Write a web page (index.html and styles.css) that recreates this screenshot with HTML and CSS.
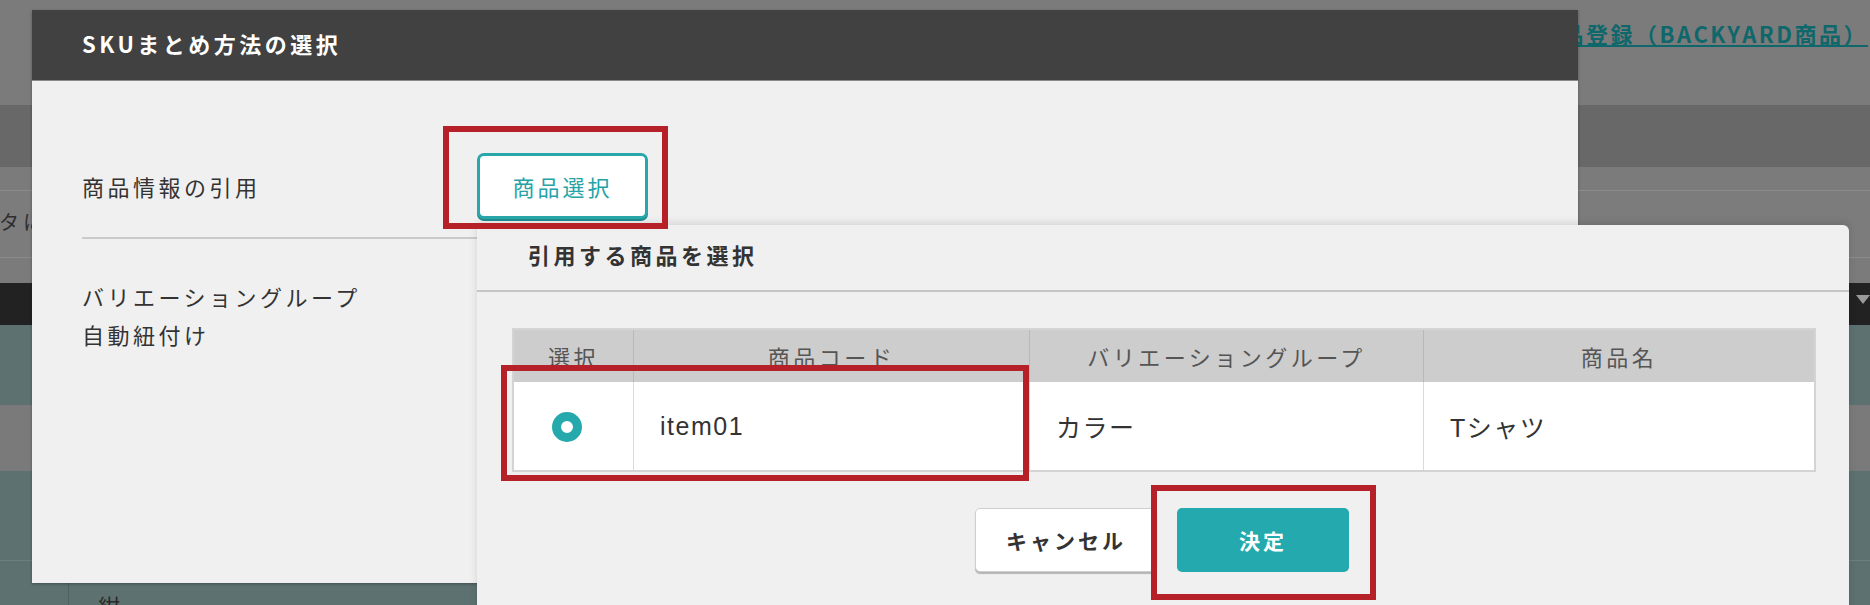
FILE: index.html
```html
<!DOCTYPE html>
<html>
<head>
    <meta charset="utf-8">
    <title>SKUまとめ方法の選択</title>
    <link rel="stylesheet" href="styles.css">
</head>
<body>
    <div class="screen">
        <!-- page behind the modal (already dimmed) -->
        <div class="backdrop">
            <div class="band band-top">
                <a class="page-link">商品登録（BACKYARD商品）</a>
            </div>
            <div class="band band-dark"></div>
            <div class="band band-gap"></div>
            <div class="band band-tabs"><span class="tab-text">タに</span></div>
            <div class="band band-gap2"></div>
            <div class="band band-black"><span class="caret"></span></div>
            <div class="band band-teal"></div>
            <div class="band band-gray"></div>
            <div class="band band-teal band-short"></div>
            <div class="band band-teal band-last">
                <span class="cell-line"></span><span class="cell-text">紺</span>
            </div>
        </div>

        <section class="dialog sku-dialog">
            <header class="dialog-title">SKUまとめ方法の選択</header>
            <div class="form-row first-row">
                <div class="form-label">商品情報の引用</div>
                <button class="outline-button">商品選択</button>
            </div>
            <div class="form-row">
                <div class="form-label">バリエーショングループ<br>自動紐付け</div>
            </div>
        </section>

        <section class="dialog pick-dialog">
            <header class="pick-title">引用する商品を選択</header>
            <table class="item-table">
                <thead>
                    <tr>
                        <th class="col-select">選択</th>
                        <th>商品コード</th>
                        <th>バリエーショングループ</th>
                        <th>商品名</th>
                    </tr>
                </thead>
                <tbody>
                    <tr>
                        <td class="col-select"><span class="radio checked"></span></td>
                        <td>item01</td>
                        <td>カラー</td>
                        <td>Tシャツ</td>
                    </tr>
                </tbody>
            </table>
            <div class="actions">
                <button class="plain-button">キャンセル</button>
                <button class="primary-button">決定</button>
            </div>
        </section>

        <!-- highlight frames -->
        <div class="mark mark-pick"></div>
        <div class="mark mark-row"></div>
        <div class="mark mark-ok"></div>
    </div>
</body>
</html>
```

FILE: styles.css
```css
body {
    margin: 0;
    font-family: 'Noto Sans CJK JP', sans-serif;
    color: #333;
}

.screen {
    position: relative;
    width: 1870px;
    height: 605px;
    overflow: hidden;
}

.backdrop {
    display: flex;
    flex-direction: column;
    height: 100%;
}

.band {
    position: relative;
    flex: none;
}

.band-top {
    height: 105px;
    background: #7b7b7b;
    display: flex;
    justify-content: flex-end;
    padding-right: 2px;
}

.page-link {
    margin-top: 17px;
    font-size: 22px;
    font-weight: bold;
    letter-spacing: 2.5px;
    line-height: 32px;
    color: #0e676b;
    text-decoration: underline;
}

.band-dark {
    height: 62px;
    background: #686868;
}

.band-gap {
    height: 23px;
    background: #7b7b7b;
}

.band-gap2 {
    height: 25px;
    background: #7b7b7b;
}

.band-tabs {
    height: 68px;
    background: #7c7c7c;
    border-top: 1px solid #8c8c8c;
    border-bottom: 1px solid #8c8c8c;
    box-sizing: border-box;
}

.tab-text {
    position: absolute;
    left: -1px;
    top: 16px;
    font-size: 20px;
    letter-spacing: 4px;
    color: #2e2e2e;
}

.band-black {
    height: 42px;
    background: #222;
}

.caret {
    position: absolute;
    right: 0;
    top: 12px;
    border-left: 7px solid transparent;
    border-right: 7px solid transparent;
    border-top: 9px solid #9a9a9a;
}

.band-teal {
    height: 80px;
    background: #5d7171;
}

.band-gray {
    height: 66px;
    background: #7a7a7a;
}

.band-short {
    height: 89px;
}

.band-last {
    height: 45px;
    border-top: 1px solid #6f7f7f;
}

.cell-line {
    position: absolute;
    left: 68px;
    top: 0;
    bottom: 0;
    border-left: 1px solid #4f6262;
}

.cell-text {
    position: absolute;
    left: 98px;
    top: 28px;
    font-size: 22px;
    color: #2a2a2a;
}

/* modal windows */
.dialog {
    position: absolute;
    background: #f0f0f0;
    box-sizing: border-box;
}

.sku-dialog {
    left: 32px;
    top: 10px;
    width: 1546px;
    height: 573px;
    box-shadow: 0 1px 3px rgba(0,0,0,0.3);
}

.dialog-title {
    height: 66px;
    line-height: 66px;
    padding-bottom: 4px;
    padding-left: 50px;
    background: #414141;
    border-bottom: 1px solid #8a8a8a;
    color: white;
    font-size: 22px;
    font-weight: bold;
    letter-spacing: 3.5px;
}

.form-row {
    display: flex;
    align-items: center;
    margin: 0 50px;
    padding: 38px 0;
}

.first-row {
    padding: 72px 0 18px;
    border-bottom: 2px solid #cacaca;
}

.form-row:not(.first-row) {
    align-items: flex-start;
}

.form-label {
    width: 395px;
    font-size: 22px;
    line-height: 38px;
    letter-spacing: 3.5px;
    color: #333;
}

.outline-button {
    width: 171px;
    height: 66px;
    background: white;
    border: 3px solid #2aa7aa;
    border-radius: 7px;
    color: #25a3a7;
    font-family: inherit;
    font-size: 22px;
    letter-spacing: 3px;
    box-shadow: 0 2px 0 #1e8e91;
}

.pick-dialog {
    left: 477px;
    top: 225px;
    width: 1372px;
    height: 400px;
    border-radius: 0 6px 0 0;
    box-shadow: 0 -2px 8px rgba(0,0,0,0.12);
}

.pick-title {
    height: 58px;
    line-height: 58px;
    padding-bottom: 7px;
    padding-left: 51px;
    border-bottom: 2px solid #c6c6c6;
    font-size: 22px;
    font-weight: bold;
    letter-spacing: 3.5px;
    color: #333;
}

.item-table {
    margin: 36px 0 0 35px;
    width: 1304px;
    border-collapse: collapse;
    border: 2px solid #d4d4d4;
    font-family: 'Liberation Sans', 'Noto Sans CJK JP', sans-serif;
    table-layout: fixed;
}

.item-table th {
    height: 52px;
    background: #cdcdcd;
    color: #555;
    font-family: 'Noto Sans CJK JP', sans-serif;
    font-size: 22px;
    font-weight: normal;
    letter-spacing: 3.5px;
    border-left: 1px solid #b9b9b9;
    padding: 0;
}

.item-table td {
    height: 88px;
    background: white;
    font-size: 25px;
    letter-spacing: 1.5px;
    color: #333;
    padding: 0 0 0 26px;
    border-left: 1px solid #dadada;
}

.item-table th:first-child, .item-table td:first-child {
    border-left: none;
}

.item-table th.col-select {
    width: 119px;
}

.item-table td.col-select {
    padding: 0 14px 0 0;
    text-align: center;
}

.item-table th:nth-child(2) { width: 395px; }
.item-table th:nth-child(3) { width: 393px; }

.radio {
    display: inline-block;
    width: 30px;
    height: 30px;
    border-radius: 50%;
    box-sizing: border-box;
    border: 9px solid #26a9ad;
    background: white;
    vertical-align: middle;
}

.actions {
    display: flex;
    justify-content: center;
    gap: 20px;
    margin-top: 36px;
    padding-right: 2px;
}

.plain-button, .primary-button {
    height: 64px;
    border-radius: 5px;
    font-family: 'Noto Sans CJK JP', sans-serif;
    font-size: 21px;
    font-weight: bold;
    letter-spacing: 3px;
}

.plain-button {
    width: 182px;
    background: white;
    color: #333;
    border: 1px solid #cfcfcf;
    box-shadow: 0 2px 1px #b5b5b5;
}

.primary-button {
    width: 172px;
    background: #24aaae;
    color: white;
    border: none;
}

/* red annotation frames */
.mark {
    position: absolute;
    border: 6px solid #b52029;
    box-sizing: border-box;
}

.mark-pick {
    left: 443px;
    top: 126px;
    width: 225px;
    height: 103px;
}

.mark-row {
    left: 501px;
    top: 365px;
    width: 528px;
    height: 116px;
}

.mark-ok {
    left: 1151px;
    top: 485px;
    width: 225px;
    height: 115px;
}
```
